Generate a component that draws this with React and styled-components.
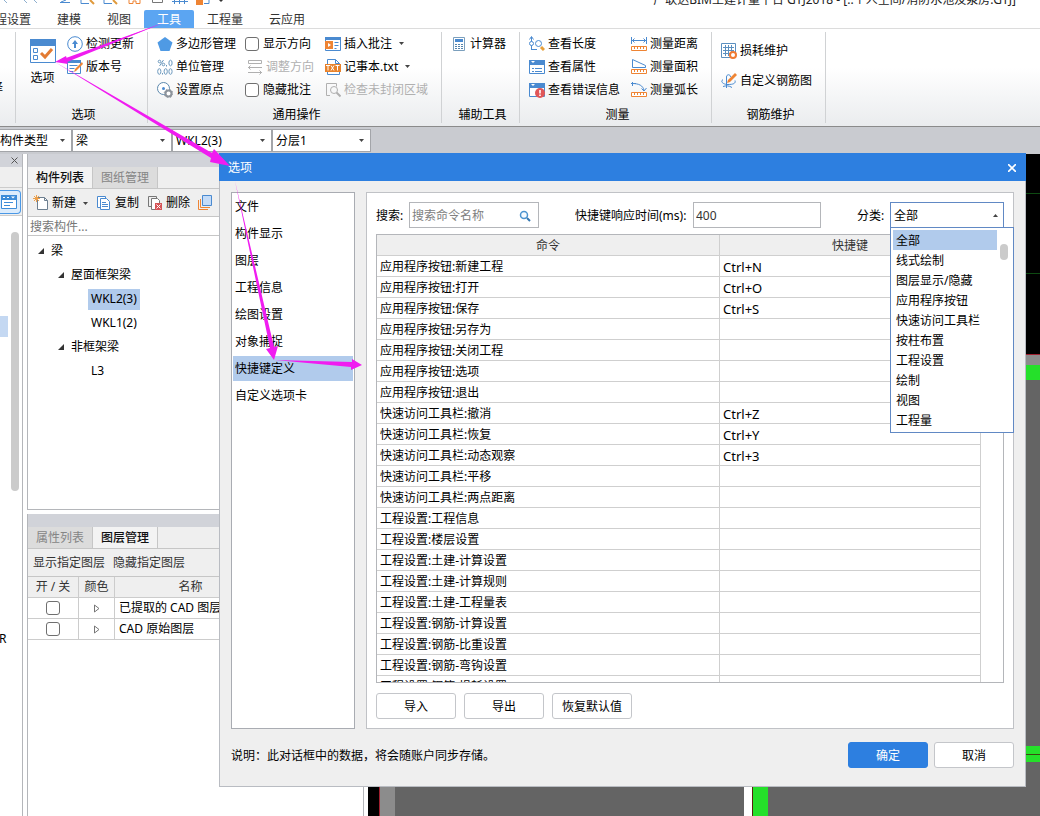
import { useState } from "react";
import styled, { createGlobalStyle, css } from "styled-components";

const tabs = ["工程设置", "建模", "视图", "工具", "工程量", "云应用"];

const pages = [
  "文件",
  "构件显示",
  "图层",
  "工程信息",
  "绘图设置",
  "对象捕捉",
  "快捷键定义",
  "自定义选项卡",
];

const commands = [
  ["应用程序按钮:新建工程", "Ctrl+N"],
  ["应用程序按钮:打开", "Ctrl+O"],
  ["应用程序按钮:保存", "Ctrl+S"],
  ["应用程序按钮:另存为", ""],
  ["应用程序按钮:关闭工程", ""],
  ["应用程序按钮:选项", ""],
  ["应用程序按钮:退出", ""],
  ["快速访问工具栏:撤消", "Ctrl+Z"],
  ["快速访问工具栏:恢复", "Ctrl+Y"],
  ["快速访问工具栏:动态观察", "Ctrl+3"],
  ["快速访问工具栏:平移", ""],
  ["快速访问工具栏:两点距离", ""],
  ["工程设置:工程信息", ""],
  ["工程设置:楼层设置", ""],
  ["工程设置:土建-计算设置", ""],
  ["工程设置:土建-计算规则", ""],
  ["工程设置:土建-工程量表", ""],
  ["工程设置:钢筋-计算设置", ""],
  ["工程设置:钢筋-比重设置", ""],
  ["工程设置:钢筋-弯钩设置", ""],
  ["工程设置:钢筋-损耗设置", ""],
];

const categories = [
  "全部",
  "线式绘制",
  "图层显示/隐藏",
  "应用程序按钮",
  "快速访问工具栏",
  "按柱布置",
  "工程设置",
  "绘制",
  "视图",
  "工程量",
];

const tree = [
  { name: "梁", level: 0, open: true },
  { name: "屋面框架梁", level: 1, open: true },
  { name: "WKL2(3)", level: 2 },
  { name: "WKL1(2)", level: 2 },
  { name: "非框架梁", level: 1, open: true },
  { name: "L3", level: 2 },
];

const BLUE = "#4a8ad0";
const ORANGE = "#ee8434";

const ruler = (
  <>
    <path d="M.5 10.5h15v4H.5z" fill="#fff" stroke={ORANGE} />
    <path d="M3.500 11v2M6.500 11v2M9.500 11v2M12.500 11v2" stroke={ORANGE} />
  </>
);

const windowFrame = (
  <>
    <path d="M.5 1.500h15v13H.5z" fill="#fff" stroke={BLUE} />
    <path d="M0 1h16v5H0z" fill={BLUE} />
    <path d="M2 2h4L4 4z" fill="#fff" />
  </>
);

const icons = {
  update: (
    <>
      <circle cx="8" cy="8" r="7.300" fill="#fff" stroke={BLUE} />
      <path d="M8 4l3 4H9v4H7V8H5z" fill={BLUE} />
    </>
  ),
  version: (
    <>
      <path d="M.5 2.500h13v12H.5z" fill="#fff" stroke={BLUE} />
      <path d="M0 1h14v3H0z" fill={BLUE} />
      <path d="M2.500 6.500h8M2.500 9.500h5M2.500 12.500h4" stroke={BLUE} />
      <path d="M15 3l1 2-7 7-2 1 1-3z" fill={ORANGE} />
    </>
  ),
  polygon: <path d="M8 1l7.500 5.500-3 8.500h-9L.5 6.500z" fill="#4f9ae4" />,
  unit: (
    <g fill="none" stroke="#6b98bd">
      <circle cx="2.500" cy="2.500" r="1.300" />
      <circle cx="6.500" cy="5.500" r="1.300" />
      <path d="M6.500 1L2.500 7M9.500 6v1.500" />
      <ellipse cx="13.500" cy="4" rx="1.600" ry="2.800" />
      <ellipse cx="2.300" cy="12.500" rx="1.600" ry="2.800" />
      <path d="M5.500 14v1.500" />
      <ellipse cx="8.700" cy="12.500" rx="1.600" ry="2.800" />
      <ellipse cx="13.500" cy="12.500" rx="1.600" ry="2.800" />
    </g>
  ),
  origin: (
    <>
      <circle cx="6.500" cy="6.500" r="6" fill="#fff" stroke="#5c88ac" />
      <circle cx="6.500" cy="6.500" r="1.500" fill={BLUE} />
      <circle cx="11.500" cy="11.500" r="3" fill="#fff" stroke="#8c939b" strokeWidth="2" />
      <circle cx="11.500" cy="11.500" r="4.300" fill="none" stroke="#8c939b" strokeDasharray="1.500 1.900" />
    </>
  ),
  adjust: (
    <g fill="none" stroke="#b0b0b0">
      <path d="M1.500 1.500h13v3h-13zM1 8.500h14M3.500 6.500l-2 2 2 2M1 13.500h14M12.500 11.500l2 2-2 2" />
    </g>
  ),
  annotate: (
    <>
      <path d="M.5 1.500h15v13H.5z" fill="#fff" stroke={BLUE} />
      <path d="M0 1h16v3H0z" fill={BLUE} />
      <path d="M0 5h8v8H0z" fill={ORANGE} />
      <path d="M3 7l3 2-3 2z" fill="#fff" />
      <path d="M9.500 6.500h4M9.500 9.500h4M9.500 12.500h2" stroke={BLUE} />
    </>
  ),
  txt: (
    <>
      <path d="M2.500.5h8l4 4v11h-12z" fill="#fff" stroke={BLUE} />
      <path d="M10.500.5v4h4" fill="none" stroke={BLUE} />
      <path d="M0 5h16v8H0z" fill="#e8822b" />
      <path
        d="M1 6.500h4M3 6.500v5M6 6.500l3 5M9 6.500l-3 5M10.500 6.500h4M12.500 6.500v5"
        stroke="#fff"
      />
    </>
  ),
  region: (
    <g fill="none" stroke="#b0b0b0">
      <path d="M5 13.500H1.500v-12h10v3" />
      <circle cx="9" cy="8" r="3.500" />
      <path d="M11.500 10.500l4 4" strokeWidth="2" />
    </g>
  ),
  calc: (
    <>
      <path d="M2.500 1.500h11v13h-11z" fill="#fff" stroke="#7b9fbd" />
      <path d="M4 3h8v3H4z" fill={BLUE} />
      <path d="M4 8.500h8M4 10.500h8M4 12.500h8" stroke="#5583ab" strokeDasharray="2 1" />
    </>
  ),
  length: (
    <>
      <path d="M2.500 1v13M2 13.500h6M.5 3.500l2-3 2 3" fill="none" stroke={BLUE} />
      <circle cx="2.500" cy="7.500" r="2" fill="#fff" stroke={BLUE} />
      <circle cx="9.500" cy="7.500" r="3" fill="#fff" stroke={BLUE} />
      <path d="M12 11l3 3" stroke="#e6a03c" strokeWidth="3" />
    </>
  ),
  property: (
    <>
      {windowFrame}
      <path d="M3 9.500h2M6 9.500h7M3 12.500h2M6 12.500h7" stroke={BLUE} />
    </>
  ),
  error: (
    <>
      {windowFrame}
      <circle cx="11" cy="11" r="5" fill="#e15759" />
      <path d="M11 8v3.500M11 12.500V14" stroke="#fff" strokeWidth="1.600" />
    </>
  ),
  distance: (
    <>
      <path d="M.5 1v7M15.500 1v7M1 4.500h14M3.500 2.500l-2 2 2 2M12.500 2.500l2 2-2 2" fill="none" stroke={BLUE} />
      {ruler}
    </>
  ),
  area: (
    <>
      <path d="M1.500 8.500v-8l13 6v2z" fill="none" stroke={BLUE} />
      {ruler}
    </>
  ),
  arc: (
    <>
      <path d="M1 1.500c7 0 11 2 12 7M0 1.500h5M1.500 0v4M10.500 6.500l2.500 2.500 2.500-3" fill="none" stroke={BLUE} />
      {ruler}
    </>
  ),
  grid: (
    <>
      <path d="M.5.5h14v14H.5zM4.500 2v11M7.500 2v11M10.500 2v11M2 4.500h11M2 7.500h11M2 10.500h11" fill="#fff" stroke="#5b8fbf" />
      <circle cx="12" cy="12" r="3" fill="#fff" stroke="#f07a32" strokeWidth="2" />
    </>
  ),
  rebar: (
    <>
      <path d="M5.500 15V4c0-3 4-3 4 0M2 6.500c-3 2 0 5 5 5s8-1 7-4M2 13.500c3-1 6-1 9 1" fill="none" stroke={BLUE} />
      <path d="M14 0l2 2-7 7-3 1 1-3z" fill={ORANGE} />
    </>
  ),
  create: (
    <>
      <path d="M4.500 2.500h7l3 3v9h-10z" fill="#fff" stroke="#6d7f90" />
      <path d="M11.500 2.500v3h3" fill="none" stroke="#6d7f90" />
      <path d="M3.500 0v7M0 3.500h7M1 1l5 5M6 1L1 6" stroke="#eda04a" />
    </>
  ),
  copy: (
    <>
      <path d="M1.500 1.500h8v11h-8z" fill="#fff" stroke={BLUE} />
      <path d="M4.500 3.500h6l3 3v8h-9z" fill="#fff" stroke={BLUE} />
      <path d="M6 7.500h4M6 9.500h6M6 11.500h6" stroke={BLUE} />
    </>
  ),
  remove: (
    <>
      <path d="M4 11.500H1.500v-10h8V3" fill="none" stroke="#777" />
      <path d="M4.500 3.500h6l2 2v9h-8z" fill="#fff" stroke="#777" />
      <path d="M8 8h7v7H8z" fill="#d65357" />
      <path d="M9.500 9.500l4 4M13.500 9.500l-4 4" stroke="#fff" />
    </>
  ),
  layer: (
    <>
      <path d="M.5 5v9.500H10M2.500 4v8.500H12" fill="none" stroke={ORANGE} />
      <path d="M4.500.5h9v10h-9z" fill="#c5dcf8" stroke={BLUE} />
    </>
  ),
  panel: (
    <>
      <path d="M.5 1.500h15v13H.5z" fill="#fff" stroke="#3d8cd8" />
      <path d="M0 1h16v5H0z" fill="#3d8cd8" />
      <path d="M2 3.500h2M6 3.500h2" stroke="#fff" />
      <path d="M10 2.500h4l-2 2z" fill="#fff" />
      <path d="M3 8.500h9M3 11.500h6" stroke="#3d8cd8" />
    </>
  ),
};

const Icon = ({ name }) => (
  <Glyph viewBox="0 0 16 16" aria-hidden="true">
    {icons[name]}
  </Glyph>
);

const Caret = ({ up }) => (
  <CaretGlyph viewBox="0 0 5 3" aria-hidden="true">
    <path d={up ? "M0 3h5L2.500 0z" : "M0 0h5L2.500 3z"} fill="#444" />
  </CaretGlyph>
);

const Tool = ({ icon, label, menu, disabled }) => (
  <ToolButton type="button" disabled={disabled}>
    <Icon name={icon} />
    {label}
    {menu && <Caret />}
  </ToolButton>
);

const Check = ({ label }) => (
  <CheckLabel>
    <CheckBox type="checkbox" />
    {label}
  </CheckLabel>
);

const Combo = ({ label, value, width, flush }) => (
  <ComboBox $width={width} $flush={flush}>
    <select aria-label={label} defaultValue={value}>
      <option>{value}</option>
    </select>
    <Caret />
  </ComboBox>
);

const Ribbon = () => (
  <RibbonBar>
    <Group $width={16}>
      <ClippedTool>选择</ClippedTool>
    </Group>
    <Group $width={132}>
      <Tools $indent={10}>
        <BigButton type="button">
          <svg width="26" height="24" viewBox="0 0 26 24" aria-hidden="true">
            <path d="M.5.5h25v23H.5z" fill="#fff" stroke={BLUE} />
            <path d="M0 0h26v7H0z" fill={BLUE} />
            <path d="M3.500 9.500h4v4h-4zM3.500 16.500h4v4h-4z" fill="none" stroke={BLUE} />
            <path d="M11 14l4 4 7-8" fill="none" stroke="#e37b33" strokeWidth="3" />
          </svg>
          选项
        </BigButton>
        <Column>
          <Tool icon="update" label="检测更新" />
          <Tool icon="version" label="版本号" />
        </Column>
      </Tools>
      <GroupName>选项</GroupName>
    </Group>
    <Group $width={294}>
      <Tools $indent={9} $gap={9}>
        <Column>
          <Tool icon="polygon" label="多边形管理" />
          <Tool icon="unit" label="单位管理" />
          <Tool icon="origin" label="设置原点" />
        </Column>
        <Column $width={71}>
          <Check label="显示方向" />
          <Tool icon="adjust" label="调整方向" disabled />
          <Check label="隐藏批注" />
        </Column>
        <Column>
          <Tool icon="annotate" label="插入批注" menu />
          <Tool icon="txt" label="记事本.txt" menu />
          <Tool icon="region" label="检查未封闭区域" disabled />
        </Column>
      </Tools>
      <GroupName>通用操作</GroupName>
    </Group>
    <Group $width={78}>
      <Tools $indent={9}>
        <Column>
          <Tool icon="calc" label="计算器" />
        </Column>
      </Tools>
      <GroupName>辅助工具</GroupName>
    </Group>
    <Group $width={192}>
      <Tools $indent={9} $gap={11}>
        <Column>
          <Tool icon="length" label="查看长度" />
          <Tool icon="property" label="查看属性" />
          <Tool icon="error" label="查看错误信息" />
        </Column>
        <Column>
          <Tool icon="distance" label="测量距离" />
          <Tool icon="area" label="测量面积" />
          <Tool icon="arc" label="测量弧长" />
        </Column>
      </Tools>
      <GroupName>测量</GroupName>
    </Group>
    <Group $width={114}>
      <Tools $indent={9}>
        <Column $loose>
          <Tool icon="grid" label="损耗维护" />
          <Tool icon="rebar" label="自定义钢筋图" />
        </Column>
      </Tools>
      <GroupName>钢筋维护</GroupName>
    </Group>
  </RibbonBar>
);

const ComponentPanel = () => {
  const [selected, setSelected] = useState("WKL2(3)");
  return (
    <ListPanel>
      <Strip />
      <PanelTabs>
        <PanelTab type="button" $active>
          构件列表
        </PanelTab>
        <PanelTab type="button">图纸管理</PanelTab>
      </PanelTabs>
      <PanelTools>
        <Tool icon="create" label="新建" menu />
        <Tool icon="copy" label="复制" />
        <Tool icon="remove" label="删除" />
        <Tool icon="layer" />
      </PanelTools>
      <PanelSearch placeholder="搜索构件..." aria-label="搜索构件" />
      <Tree>
        {tree.map(({ name, level, open }) => (
          <TreeRow key={name} $level={level}>
            {open && (
              <svg width="6" height="6" viewBox="0 0 6 6" aria-hidden="true">
                <path d="M6 0v6H0z" fill="#333" />
              </svg>
            )}
            <TreeName
              type="button"
              $active={selected === name}
              onClick={() => setSelected(name)}
            >
              {name}
            </TreeName>
          </TreeRow>
        ))}
      </Tree>
    </ListPanel>
  );
};

const LayerPanel = () => (
  <LayerBox>
    <Strip />
    <PanelTabs>
      <PanelTab type="button">属性列表</PanelTab>
      <PanelTab type="button" $active>
        图层管理
      </PanelTab>
    </PanelTabs>
    <PanelTools>
      <TextButton type="button">显示指定图层</TextButton>
      <TextButton type="button">隐藏指定图层</TextButton>
    </PanelTools>
    <LayerTable>
      <colgroup>
        <col width="51" />
        <col width="36" />
        <col width="152" />
        <col />
      </colgroup>
      <thead>
        <tr>
          <th>开 / 关</th>
          <th>颜色</th>
          <th>名称</th>
          <th />
        </tr>
      </thead>
      <tbody>
        {["已提取的 CAD 图层", "CAD 原始图层"].map((name) => (
          <tr key={name}>
            <td>
              <CheckBox type="checkbox" aria-label={name} />
            </td>
            <td>
              <svg width="6" height="9" viewBox="0 0 6 9" aria-hidden="true">
                <path d="M.5 1v7l4.500-3.500z" fill="#fff" stroke="#777" />
              </svg>
            </td>
            <td>{name}</td>
            <td />
          </tr>
        ))}
      </tbody>
    </LayerTable>
  </LayerBox>
);

const Drawing = () => (
  <DrawingArea viewBox="0 0 672 662" preserveAspectRatio="xMaxYMax slice" aria-hidden="true">
    <path d="M0 0h672v662H0z" fill="#646464" />
    <path d="M0 0h672v200H0zM0 200h11v462H0z" fill="#000" />
    <path d="M12 201h660v10H12zM12 201h15v461H12z" fill="#8c8c8c" />
    <path d="M11.500 662V200.500H672" fill="none" stroke="#a02030" />
    <path d="M400 39.500h272M400 119.500h272" stroke="#0e4a12" />
    <path d="M27 211h645v15H27zM385 592h287v16H385zM385 592h15v70h-15z" fill="#25e02a" />
    <path d="M400 600.500h272" stroke="#3c4a10" />
    <path d="M376 226h8v436h-8z" fill="#fff" />
    <path d="M384.500 226v436" stroke="#5a2010" />
  </DrawingArea>
);

const OptionsDialog = () => {
  const [page, setPage] = useState("快捷键定义");
  const [category, setCategory] = useState("全部");
  return (
    <Dialog role="dialog" aria-labelledby="options-title">
      <DialogTitle>
        <h2 id="options-title">选项</h2>
        <button type="button" aria-label="关闭">
          <svg width="8" height="8" viewBox="0 0 8 8" aria-hidden="true">
            <path d="M0 0l8 8M8 0L0 8" stroke="#fff" strokeWidth="1.600" />
          </svg>
        </button>
      </DialogTitle>
      <DialogBody>
        <Nav>
          {pages.map((name) => (
            <NavItem
              key={name}
              type="button"
              $active={page === name}
              onClick={() => setPage(name)}
            >
              {name}
            </NavItem>
          ))}
        </Nav>
        <Content>
          <Filters>
            <label htmlFor="search">搜索:</label>
            <SearchField>
              <input id="search" placeholder="搜索命令名称" />
              <svg width="12" height="12" viewBox="0 0 12 12" aria-hidden="true">
                <circle cx="5" cy="5" r="3.500" fill="#f4faff" stroke="#4b93cf" strokeWidth="1.500" />
                <path d="M8 8l3 3" stroke="#3577b0" strokeWidth="2" />
              </svg>
            </SearchField>
            <label htmlFor="delay">快捷键响应时间(ms):</label>
            <DelayInput id="delay" defaultValue="400" />
            <label htmlFor="category">分类:</label>
            <CategoryBox>
              <select
                id="category"
                value={category}
                onChange={(e) => setCategory(e.target.value)}
              >
                {categories.map((name) => (
                  <option key={name}>{name}</option>
                ))}
              </select>
              <Caret up />
              <Menu role="listbox" aria-label="分类">
                <MenuList>
                  {categories.map((name) => (
                    <MenuItem
                      key={name}
                      role="option"
                      aria-selected={category === name}
                      $active={category === name}
                      onClick={() => setCategory(name)}
                    >
                      {name}
                    </MenuItem>
                  ))}
                </MenuList>
                <MenuThumb />
              </Menu>
            </CategoryBox>
          </Filters>
          <TableFrame>
            <CommandTable>
              <colgroup>
                <col />
                <col width="261" />
                <col width="22" />
              </colgroup>
              <thead>
                <tr>
                  <th>命令</th>
                  <th>快捷键</th>
                  <th />
                </tr>
              </thead>
              <tbody>
                {commands.map(([name, keys]) => (
                  <tr key={name}>
                    <td>{name}</td>
                    <td>{keys}</td>
                    <td />
                  </tr>
                ))}
              </tbody>
            </CommandTable>
          </TableFrame>
          <Actions>
            <Button type="button">导入</Button>
            <Button type="button">导出</Button>
            <Button type="button">恢复默认值</Button>
          </Actions>
        </Content>
      </DialogBody>
      <DialogFooter>
        <p>说明：此对话框中的数据，将会随账户同步存储。</p>
        <Button type="button" $primary>
          确定
        </Button>
        <Button type="button">取消</Button>
      </DialogFooter>
    </Dialog>
  );
};

const Arrows = () => (
  <ArrowLayer width="370" height="380" viewBox="0 0 370 380" aria-hidden="true">
    <path d="M163 23L67 59l-1-3-11 6 13 2-1-3 2-1z" />
    <path d="M163 23L66 58l1 4z" />
    <path d="M55 62l157 91 2-4 16 17-20-4 1-4z" />
    <path d="M235 181l39 166 4-1-4 14-8-11 4-1z" />
    <path d="M275 360l77 2v-3l10 6-11 5v-3z" />
  </ArrowLayer>
);

const App = () => (
  <Page>
    <GlobalStyle />
    <TitleBar>
      <svg width="230" height="9" viewBox="0 0 230 9" aria-hidden="true">
        <path d="M4 0l3 3M24 0l3 3M34 0l3 3" stroke="#8fb0cf" />
        <path d="M60 2.500h10M66 0l-5 2M81 0v3.500h8M104 0v3.500h8" fill="none" stroke={BLUE} />
        <path d="M90 0l4 4M113 0l4 4" stroke="#e09a3c" strokeWidth="2" />
        <path d="M129 0v3.500h4V1h3v2.500h4V0" fill="none" stroke={ORANGE} />
        <path d="M152.500 0v2.500h10V0" fill="none" stroke="#777" />
        <path d="M172 1.500h16M174.500 0v4M179.500 0v4M184.500 0v4" stroke={BLUE} />
        <path d="M196 0h7v5h-7z" fill={ORANGE} />
        <path d="M204 3.500h5V0" fill="none" stroke={BLUE} />
        <path d="M219 0h4l-2 2z" fill="#333" />
      </svg>
      <h1>广联达BIM土建计量平台 GTJ2018 - [..个人空间/消防水池及泵房.GTJ]</h1>
    </TitleBar>
    <TabBar>
      {tabs.map((name) => (
        <Tab key={name} type="button" $active={name === "工具"}>
          {name}
        </Tab>
      ))}
    </TabBar>
    <Ribbon />
    <ComboBar>
      <Combo label="构件类型" value="构件类型" width={72} flush />
      <Combo label="构件" value="梁" width={100} />
      <Combo label="名称" value="WKL2(3)" width={100} />
      <Combo label="分层" value="分层1" width={99} />
    </ComboBar>
    <Workspace>
      <SideBar>
        <Strip>
          <svg width="7" height="7" viewBox="0 0 7 7" aria-hidden="true">
            <path d="M.5.5l6 6M6.500.5l-6 6" stroke="#555" />
          </svg>
        </Strip>
        <SideHead />
        <SideTools>
          <SideButton type="button" aria-label="导航栏">
            <Icon name="panel" />
          </SideButton>
        </SideTools>
        <SideTree>
          <SideMark />
          <SideThumb />
          <SideText>R</SideText>
        </SideTree>
      </SideBar>
      <Docks>
        <ComponentPanel />
        <LayerPanel />
      </Docks>
      <Drawing />
    </Workspace>
    <OptionsDialog />
    <Arrows />
  </Page>
);

const GlobalStyle = createGlobalStyle`
  * {
    box-sizing: border-box;
  }
  body {
    margin: 0;
  }
  body, button, input, select {
    font-family: "Noto Sans", "Noto Sans CJK SC", sans-serif;
    font-size: 12px;
    line-height: 18px;
    color: #000;
  }
  button {
    padding: 0;
    border: 0;
    background: transparent;
    white-space: nowrap;
  }
  h1, h2, p, ul {
    margin: 0;
    padding: 0;
    font-size: 12px;
    font-weight: 400;
  }
  select {
    appearance: none;
    border: 0;
    background: transparent;
  }
`;

const Page = styled.div`
  position: relative;
  display: flex;
  flex-direction: column;
  height: 100vh;
  overflow: hidden;
  background: #fff;
`;

const TitleBar = styled.header`
  display: flex;
  flex: none;
  align-items: flex-end;
  justify-content: space-between;
  height: 9px;
  padding-right: 24px;
  overflow: hidden;
  h1 {
    white-space: nowrap;
    color: #222;
  }
`;

const TabBar = styled.nav`
  display: flex;
  flex: none;
  height: 20px;
  margin-left: -30px;
  padding-top: 1px;
  border-bottom: 1px solid #dcdcdc;
`;

const Tab = styled.button`
  padding: 1px 13px 0;
  color: #333;
  ${({ $active }) =>
    $active &&
    css`
      border-radius: 2px 2px 0 0;
      background: #5ba5f2;
      color: #fff;
    `}
`;

const RibbonBar = styled.div`
  display: flex;
  flex: none;
  height: 98px;
  padding: 3px 0;
  border-bottom: 1px solid #8b8b8b;
  background: linear-gradient(#fff 40%, #eaecee);
`;

const Group = styled.section`
  display: flex;
  flex: none;
  flex-direction: column;
  width: ${({ $width }) => $width}px;
  overflow: hidden;
  border-right: 1px solid #d0d2d4;
`;

const ClippedTool = styled.span`
  margin: 47px 0 0 -21px;
  white-space: nowrap;
`;

const Tools = styled.div`
  display: flex;
  flex: none;
  height: 71px;
  padding-left: ${({ $indent }) => $indent}px;
  gap: ${({ $gap }) => $gap || 8}px;
`;

const Glyph = styled.svg`
  flex: none;
  width: 16px;
  height: 16px;
`;

const CaretGlyph = styled.svg`
  flex: none;
  width: 5px;
  height: 3px;
`;

const ToolButton = styled.button`
  display: flex;
  align-items: center;
  gap: 3px;
  height: 23px;
  ${CaretGlyph} {
    margin-left: 4px;
  }
  &:disabled {
    color: #b0b0b0;
  }
`;

const Column = styled.div`
  display: flex;
  flex-direction: column;
  ${({ $width }) =>
    $width &&
    css`
      width: ${$width}px;
      ${ToolButton} {
        padding-left: 2px;
      }
    `}
  ${({ $loose }) =>
    $loose &&
    css`
      gap: 7px;
      padding-top: 7px;
    `}
`;

const GroupName = styled.div`
  flex: none;
  padding-left: 4px;
  text-align: center;
  line-height: 24px;
`;

const BigButton = styled.button`
  display: flex;
  flex-direction: column;
  align-items: center;
  gap: 6px;
  width: 33px;
  padding-top: 7px;
`;

const CheckLabel = styled.label`
  display: flex;
  align-items: center;
  gap: 4px;
  height: 23px;
  white-space: nowrap;
`;

const CheckBox = styled.input`
  appearance: none;
  width: 14px;
  height: 14px;
  margin: 0;
  border: 1px solid #6f6f6f;
  border-radius: 3px;
  background: #fff;
`;

const ComboBar = styled.div`
  display: flex;
  flex: none;
  height: 27px;
  padding: 2px 0;
  background: #c9cbd0;
`;

const ComboBox = styled.div`
  display: flex;
  align-items: center;
  width: ${({ $width }) => $width}px;
  padding-right: 6px;
  border: 1px solid #a3a5a9;
  border-left-width: ${({ $flush }) => ($flush ? 0 : 1)}px;
  background: #fff;
  select {
    flex: 1;
    min-width: 0;
    padding: 0 0 0 ${({ $flush }) => ($flush ? 0 : 3)}px;
  }
`;

const Workspace = styled.main`
  display: flex;
  flex: 1;
  min-height: 0;
`;

const Strip = styled.div`
  display: flex;
  flex: none;
  align-items: center;
  justify-content: flex-end;
  height: 13px;
  padding-right: 4px;
  background: #d1d3d9;
`;

const SideBar = styled.aside`
  display: flex;
  flex-direction: column;
  width: 23px;
  border-right: 1px solid #b4b6ba;
`;

const SideHead = styled.div`
  height: 21px;
  border-bottom: 1px solid #ccc;
  background: #efefef;
`;

const SideTools = styled.div`
  display: flex;
  align-items: center;
  height: 28px;
  border-bottom: 1px solid #ccc;
  background: #efefef;
`;

const SideButton = styled.button`
  display: flex;
  align-items: center;
  justify-content: flex-end;
  width: 21px;
  height: 24px;
  padding-right: 3px;
  border: 1px solid #4a98e6;
  border-left: 0;
  border-radius: 0 4px 4px 0;
  background: #dcecfc;
`;

const SideTree = styled.div`
  position: relative;
  flex: 1;
`;

const SideMark = styled.div`
  position: absolute;
  top: 100px;
  width: 8px;
  height: 21px;
  background: #c4d8f2;
`;

const SideThumb = styled.div`
  position: absolute;
  top: 16px;
  right: 3px;
  width: 8px;
  height: 259px;
  border-radius: 4px;
  background: #cbcbcb;
`;

const SideText = styled.span`
  position: absolute;
  top: 414px;
  left: -1px;
`;

const Docks = styled.div`
  display: flex;
  flex: none;
  flex-direction: column;
  gap: 4px;
  width: 345px;
  padding: 0 4px;
`;

const ListPanel = styled.section`
  display: flex;
  flex: none;
  flex-direction: column;
  height: 356px;
  border: 1px solid #b4b6ba;
  border-top: 0;
`;

const LayerBox = styled.section`
  flex: 1;
  border: solid #b4b6ba;
  border-width: 0 1px;
`;

const PanelTabs = styled.div`
  display: flex;
  height: 22px;
  border-bottom: 1px solid #c6c6c6;
  background: #efefef;
`;

const PanelTab = styled.button`
  width: 65px;
  border-right: 1px solid #c6c6c6;
  background: ${({ $active }) => ($active ? "#f3f3f3" : "#dcdcdc")};
  color: ${({ $active }) => ($active ? "#111" : "#858585")};
  font-weight: ${({ $active }) => ($active ? 500 : 400)};
`;

const PanelTools = styled.div`
  display: flex;
  align-items: center;
  gap: 8px;
  height: 28px;
  padding: 1px 0 0 5px;
  overflow: hidden;
  border-bottom: 1px solid #c6c6c6;
  background: #efefef;
`;

const TextButton = styled.button`
  color: #333;
`;

const PanelSearch = styled.input`
  height: 19px;
  padding: 0 2px;
  border: 0;
  border-bottom: 1px solid #c6c6c6;
  outline: 0;
  &::placeholder {
    color: #777;
  }
`;

const Tree = styled.div`
  padding-top: 3px;
`;

const TreeRow = styled.div`
  display: flex;
  align-items: center;
  gap: 4px;
  height: 24px;
  padding-left: ${({ $level }) => 10 + $level * 20 + ($level === 2 ? 10 : 0)}px;
`;

const TreeName = styled.button`
  height: 21px;
  padding: 0 3px;
  background: ${({ $active }) => ($active ? "#b1cbec" : "transparent")};
`;

const LayerTable = styled.table`
  width: 100%;
  table-layout: fixed;
  border-collapse: separate;
  border-spacing: 0;
  th,
  td {
    height: 21px;
    padding: 0;
    border: solid #ccc;
    border-width: 0 1px 1px 0;
    text-align: center;
    white-space: nowrap;
  }
  th {
    background: #efefef;
    font-weight: 400;
    color: #333;
  }
  td:nth-child(3) {
    padding-left: 4px;
    text-align: left;
  }
  input,
  svg {
    display: block;
    margin: 0 auto;
  }
`;

const DrawingArea = styled.svg`
  flex: 1;
  min-width: 0;
  height: 100%;
`;

const Dialog = styled.div`
  position: absolute;
  top: 153px;
  right: 14px;
  bottom: 29px;
  left: 219px;
  display: flex;
  flex-direction: column;
  border: 1px solid #b9bcc2;
  border-top: 0;
  background: #efefef;
`;

const DialogTitle = styled.div`
  display: flex;
  align-items: center;
  justify-content: space-between;
  height: 28px;
  margin: 0 -1px;
  padding: 1px 10px 0 9px;
  background: #2d7fe0;
  h2 {
    color: #fff;
  }
  svg {
    display: block;
  }
`;

const DialogBody = styled.div`
  display: flex;
  flex: 1;
  gap: 11px;
  min-height: 0;
  padding: 11px 11px 0;
`;

const Nav = styled.nav`
  display: flex;
  flex: none;
  flex-direction: column;
  gap: 2px;
  width: 124px;
  padding: 1px;
  border: 1px solid #a9acb2;
  background: #fff;
`;

const NavItem = styled.button`
  height: 25px;
  padding: 1px 2px 0;
  background: ${({ $active }) => ($active ? "#b1cbec" : "transparent")};
  text-align: left;
`;

const Content = styled.div`
  display: flex;
  flex: 1;
  flex-direction: column;
  min-width: 0;
  padding: 9px;
  border: 1px solid #c0c2c6;
  background: #fff;
`;

const Filters = styled.div`
  display: flex;
  align-items: center;
  height: 26px;
  margin-bottom: 6px;
  label {
    flex: none;
    width: 33px;
    padding-top: 2px;
    white-space: nowrap;
  }
  label:nth-of-type(2) {
    width: 118px;
    margin-left: 36px;
  }
  label:nth-of-type(3) {
    margin-left: auto;
  }
`;

const fieldFrame = css`
  height: 26px;
  border: 1px solid #b4b6ba;
  background: #fff;
`;

const SearchField = styled.div`
  ${fieldFrame}
  display: flex;
  align-items: center;
  width: 130px;
  padding: 1px 7px 0 2px;
  input {
    flex: 1;
    min-width: 0;
    padding: 0;
    border: 0;
    outline: 0;
  }
  input::placeholder {
    color: #808080;
  }
`;

const DelayInput = styled.input`
  ${fieldFrame}
  width: 128px;
  padding: 0 2px;
  color: #333;
`;

const CategoryBox = styled.div`
  ${fieldFrame}
  position: relative;
  display: flex;
  align-items: center;
  width: 114px;
  padding: 1px 5px 0 0;
  border-color: #6189c4;
  select {
    flex: 1;
    min-width: 0;
    padding: 0 3px;
  }
`;

const Menu = styled.div`
  position: absolute;
  z-index: 1;
  top: 24px;
  left: -1px;
  display: flex;
  gap: 3px;
  width: 124px;
  padding: 2px 5px 2px 2px;
  border: 1px solid #6189c4;
  background: #fff;
`;

const MenuList = styled.ul`
  flex: 1;
  list-style: none;
`;

const MenuItem = styled.li`
  height: 20px;
  padding: 2px 0 0 3px;
  background: ${({ $active }) => ($active ? "#b1cbec" : "transparent")};
`;

const MenuThumb = styled.div`
  width: 8px;
  height: 16px;
  margin-top: 14px;
  border-radius: 4px;
  background: #cbcbcb;
`;

const TableFrame = styled.div`
  flex: 1;
  min-height: 0;
  overflow: hidden;
  border: 1px solid #b4b6ba;
`;

const CommandTable = styled.table`
  width: 100%;
  table-layout: fixed;
  border-collapse: separate;
  border-spacing: 0;
  th,
  td {
    height: 21px;
    padding: 2px 3px 0;
    border: solid #cfcfcf;
    border-width: 0 1px 1px 0;
  }
  th {
    background: #efefef;
    font-weight: 400;
    color: #333;
  }
  td:nth-child(2) {
    font-size: 13px;
  }
  tr > :last-child {
    border-right: 0;
  }
  td:last-child {
    border-bottom: 0;
  }
`;

const Actions = styled.div`
  display: flex;
  gap: 8px;
  margin-top: 10px;
`;

const Button = styled.button`
  width: 80px;
  height: 26px;
  padding-top: 1px;
  border: 1px solid ${({ $primary }) => ($primary ? "#2d7fe0" : "#c4c6ca")};
  border-radius: 3px;
  background: ${({ $primary }) => ($primary ? "#2d7fe0" : "#fff")};
  color: ${({ $primary }) => ($primary ? "#fff" : "#000")};
`;

const DialogFooter = styled.div`
  display: flex;
  align-items: center;
  gap: 6px;
  height: 57px;
  padding: 0 11px 5px;
  p {
    flex: 1;
    padding-top: 2px;
  }
`;

const ArrowLayer = styled.svg`
  position: absolute;
  top: 0;
  left: 0;
  fill: #f01cf0;
  pointer-events: none;
`;

export default App;
